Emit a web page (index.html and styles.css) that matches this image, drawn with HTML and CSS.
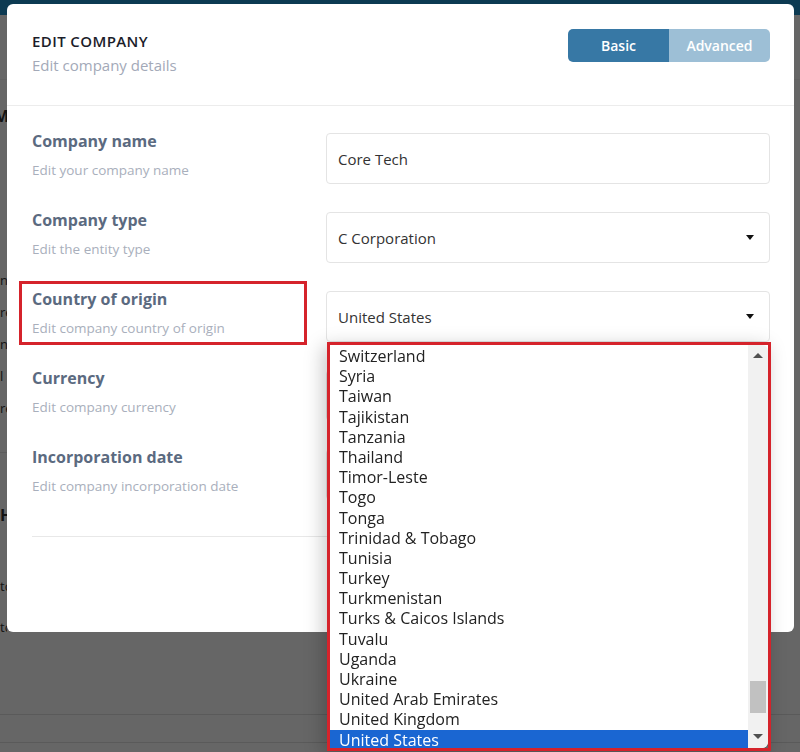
FILE: index.html
```html
<!DOCTYPE html>
<html lang="en">
<head>
  <meta charset="UTF-8" />
  <title>Edit Company</title>
  <link rel="stylesheet" href="styles.css">
</head>
<body>

  <!-- page behind the modal -->
  <div class="page">
    <div class="topbar"></div>
    <div class="bg-nav"></div>
    <div class="bg-left">
      <div class="bg-title">M</div>
      <div class="bg-list">
        <div>n</div>
        <div>re</div>
        <div>n</div>
        <div>l</div>
        <div>re</div>
      </div>
      <div class="bg-sep"></div>
      <div class="bg-heading">H</div>
      <div class="bg-line">tc</div>
      <div class="bg-line bg-split">tc</div>
    </div>
    <div class="bg-rule first"></div>
    <div class="bg-rule"></div>
  </div>

  <div class="overlay"></div>

  <div class="modal">
    <div class="modal-header">
      <div>
        <div class="title">EDIT COMPANY</div>
        <div class="subtitle">Edit company details</div>
      </div>
      <div class="toggle">
        <button class="basic">Basic</button>
        <button class="advanced">Advanced</button>
      </div>
    </div>

    <div class="modal-body">
      <div class="rows">
        <div class="row">
          <div class="field-label">
            <div class="label-title">Company name</div>
            <div class="label-hint">Edit your company name</div>
          </div>
          <div class="input">Core Tech</div>
        </div>

        <div class="row">
          <div class="field-label">
            <div class="label-title">Company type</div>
            <div class="label-hint">Edit the entity type</div>
          </div>
          <div class="input">C Corporation <span class="caret"></span></div>
        </div>

        <div class="row">
          <div class="field-label marked">
            <div class="label-title">Country of origin</div>
            <div class="label-hint">Edit company country of origin</div>
          </div>
          <div class="input">United States <span class="caret"></span>
            <div class="popup-frame">
              <div class="popup">
                <div class="options">
                  <div class="option">Switzerland</div>
                  <div class="option">Syria</div>
                  <div class="option">Taiwan</div>
                  <div class="option">Tajikistan</div>
                  <div class="option">Tanzania</div>
                  <div class="option">Thailand</div>
                  <div class="option">Timor-Leste</div>
                  <div class="option">Togo</div>
                  <div class="option">Tonga</div>
                  <div class="option">Trinidad &amp; Tobago</div>
                  <div class="option">Tunisia</div>
                  <div class="option">Turkey</div>
                  <div class="option">Turkmenistan</div>
                  <div class="option">Turks &amp; Caicos Islands</div>
                  <div class="option">Tuvalu</div>
                  <div class="option">Uganda</div>
                  <div class="option">Ukraine</div>
                  <div class="option">United Arab Emirates</div>
                  <div class="option">United Kingdom</div>
                  <div class="option selected">United States</div>
                </div>
                <div class="scrollbar">
                  <span class="arrow up"></span>
                  <span class="thumb"></span>
                  <span class="arrow down"></span>
                </div>
              </div>
            </div>
          </div>
        </div>

        <div class="row">
          <div class="field-label">
            <div class="label-title">Currency</div>
            <div class="label-hint">Edit company currency</div>
          </div>
          <div class="input"></div>
        </div>

        <div class="row">
          <div class="field-label">
            <div class="label-title">Incorporation date</div>
            <div class="label-hint">Edit company incorporation date</div>
          </div>
          <div class="input"></div>
        </div>
      </div>
      <div class="footer-line"></div>
    </div>
  </div>

</body>
</html>
```

FILE: styles.css
```css
body {
  margin: 0;
  width: 800px;
  height: 752px;
  overflow: hidden;
  position: relative;
  background: #fff;
  font-family: "Open Sans", sans-serif;
  color: #333;
}

/* background page */
.page {
  height: 752px;
  color: #333;
}

.topbar {
  height: 15px;
  background: #1e91cd;
}

.bg-nav {
  height: 64px;
  border-bottom: 1px solid #f2f2f2;
}

.bg-left {
  width: 7px;
  overflow: hidden;
}

.bg-title {
  margin: 26px 0 0 -6px;
  font-weight: 700;
  font-size: 16px;
  line-height: 20px;
}

.bg-list {
  margin-top: 138px;
  font-size: 13px;
  line-height: 32px;
}

.bg-sep {
  margin-top: 28px;
  border-top: 1px solid #e6e6e6;
}

.bg-heading {
  margin-top: 52px;
  font-weight: 700;
  font-size: 16px;
  line-height: 20px;
}

.bg-line {
  margin-top: 51px;
  font-size: 13px;
  line-height: 20px;
}

.bg-split {
  margin-top: 21px;
}

.bg-rule {
  margin-top: 27px;
  border-top: 1px solid #e2e2e2;
}

.bg-rule.first {
  margin-top: 77px;
}

.overlay {
  position: fixed;
  inset: 0;
  background: rgba(0, 0, 0, 0.6);
}

/* modal */
.modal {
  position: absolute;
  left: 7px;
  top: 4px;
  width: 787px;
  height: 628px;
  background: #fff;
  border-radius: 6px;
}

.modal-header {
  display: flex;
  justify-content: space-between;
  align-items: flex-start;
  height: 102px;
  padding: 25px 24px 0 25px;
  border-bottom: 1px solid #ececec;
  box-sizing: border-box;
}

.title {
  margin-top: 2px;
  font-size: 15px;
  font-weight: 600;
  line-height: 20px;
  letter-spacing: 0.4px;
  color: #1b1d2a;
}

.subtitle {
  margin-top: 4px;
  font-size: 15px;
  line-height: 20px;
  color: #a3a9b8;
}

.toggle {
  display: flex;
  border-radius: 5px;
  overflow: hidden;
}

.toggle button {
  width: 101px;
  height: 33px;
  border: none;
  padding: 0;
  font-family: "Open Sans", sans-serif;
  font-size: 14px;
  font-weight: 600;
  color: #fff;
}

.toggle .basic {
  background: #3778a5;
}

.toggle .advanced {
  background: #9dbfd6;
}

.modal-body {
  padding: 27px 24px 0 25px;
}

.rows {
  display: flex;
  flex-direction: column;
  gap: 28px;
}

.row {
  display: grid;
  grid-template-columns: 294px 1fr;
  height: 51px;
}

.field-label {
  position: relative;
}

.label-title {
  margin-top: -1px;
  font-size: 16px;
  font-weight: 700;
  line-height: 18px;
  color: #5b6a80;
}

.label-hint {
  margin-top: 11px;
  font-size: 13.5px;
  line-height: 18px;
  color: #a9afbc;
}

.field-label.marked::after {
  content: "";
  position: absolute;
  left: -13px;
  top: -10px;
  width: 288px;
  height: 64px;
  border: 3px solid #d5232b;
  box-sizing: border-box;
}

.input {
  position: relative;
  display: flex;
  align-items: center;
  justify-content: space-between;
  height: 51px;
  padding: 0 15px 0 11px;
  border: 1px solid #e4e4e4;
  border-radius: 4px;
  box-sizing: border-box;
  font-size: 15px;
  color: #333;
}

.caret {
  width: 0;
  height: 0;
  border-left: 4.5px solid transparent;
  border-right: 4.5px solid transparent;
  border-top: 5px solid #111;
}

.footer-line {
  margin-top: 36px;
  border-top: 1px solid #e8e8e8;
}

/* open select list */
.popup-frame {
  position: absolute;
  left: 0;
  top: 50px;
  width: 444px;
  height: 409px;
  border: 3px solid #d5232b;
  box-sizing: border-box;
  box-shadow: -4px 4px 18px rgba(0, 0, 0, 0.22);
  z-index: 5;
}

.popup {
  display: flex;
  height: 100%;
  background: #fff;
  border-radius: 0 6px 6px 0;
  overflow: hidden;
}

.options {
  flex: 1;
  padding-top: 1px;
  overflow: hidden;
  font-size: 16px;
  color: #222;
}

.option {
  height: 20.2px;
  line-height: 20.2px;
  padding-left: 9px;
  white-space: nowrap;
}

.option.selected {
  background: #1a66d2;
  color: #fff;
}

.scrollbar {
  position: relative;
  width: 20px;
  background: #f1f1f1;
}

.arrow {
  position: absolute;
  left: 5px;
  width: 0;
  height: 0;
  border-left: 5px solid transparent;
  border-right: 5px solid transparent;
}

.arrow.up {
  top: 8px;
  border-bottom: 5px solid #505050;
}

.arrow.down {
  bottom: 9px;
  border-top: 5px solid #505050;
}

.thumb {
  position: absolute;
  left: 2px;
  top: 336px;
  width: 16px;
  height: 32px;
  background: #c1c1c1;
}
```
